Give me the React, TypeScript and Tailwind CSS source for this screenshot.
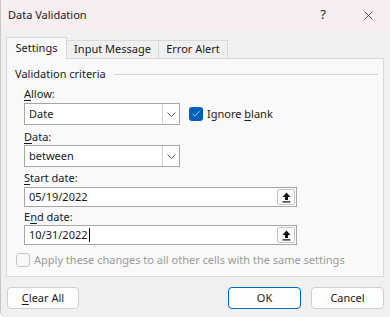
import { Check, X } from "lucide-react";

const font = { fontFamily: '"Noto Sans", "Segoe UI", sans-serif' };

function Label({ text, u, className = "" }: { text: string; u: number; className?: string }) {
  return (
    <div className={`h-4 text-[11px] leading-4 text-[#1a1a1a] ${className}`}>
      {text.slice(0, u)}
      <span className="underline underline-offset-2">{text[u]}</span>
      {text.slice(u + 1)}
    </div>
  );
}

function Dropdown({ value }: { value: string }) {
  return (
    <div className="flex h-[22px] w-[156px] border border-[#a6a6a6] bg-white">
      <div className="flex-1 pl-[4px] text-[11px] leading-5 text-[#1a1a1a]">{value}</div>
      <div className="flex w-[17px] items-center justify-center border-l border-[#cfcfcf]">
        <svg width="9" height="5" viewBox="0 0 9 5">
          <path d="M0.5 0.5 L4.5 4.5 L8.5 0.5" fill="none" stroke="#606060" strokeWidth="1" />
        </svg>
      </div>
    </div>
  );
}

function RangeInput({ value, caret }: { value: string; caret?: boolean }) {
  return (
    <div className="flex h-5 w-[273px] items-center border border-[#a6a6a6] bg-white pr-[1px]">
      <div className="flex flex-1 items-center pl-[4px] text-[11px] leading-4 text-[#1a1a1a]">
        {value}
        {caret && <span className="ml-px inline-block h-[14px] w-px bg-black" />}
      </div>
      <div className="flex h-[16px] w-[18px] items-center justify-center rounded-[2px] border border-[#c4c4c4] bg-[#fbfbfb]">
        <svg width="9" height="11" viewBox="0 0 9 11">
          <path d="M4.5 0.5 L8.5 5 L6 5 L6 8 L3 8 L3 5 L0.5 5 Z" fill="#111" />
          <rect x="0.5" y="9.3" width="8" height="1.2" fill="#111" />
        </svg>
      </div>
    </div>
  );
}

export default function App() {
  return (
    <div style={font} className="relative h-[317px] w-[390px] overflow-hidden rounded-bl-[6px] border-l border-[#c8c8c8] bg-[#f0f0f0]">
      <div className="flex h-[30px] items-center bg-[#f7eef2] pl-[7px] text-[11px] text-[#1a1a1a]">
        <span>Data Validation</span>
        <span className="ml-auto mr-[35px] text-[13px]">?</span>
        <X size={15} strokeWidth={1.2} className="mr-[14px] text-[#222]" />
      </div>

      <div className="ml-[5px] mt-[7px] flex h-[21px] items-end text-[11px] text-[#1a1a1a]">
        <div className="relative z-10 -mb-px flex h-[22px] w-[61px] items-center justify-center border border-b-0 border-[#d9d9d9] bg-[#f9f9f9]">
          Settings
        </div>
        <div className="flex h-[18px] w-[92px] items-center justify-center border border-b-0 border-l-0 border-[#d9d9d9] bg-[#f0f0f0]">
          Input Message
        </div>
        <div className="flex h-[18px] w-[69px] items-center justify-center border border-b-0 border-l-0 border-[#d9d9d9] bg-[#f0f0f0]">
          Error Alert
        </div>
      </div>

      <div className="ml-[5px] h-[219px] w-[378px] border border-[#d9d9d9] bg-[#f9f9f9]">
        <div className="mt-[7px] flex h-4 items-center pl-[8px]">
          <span className="text-[11px] leading-4 text-[#1a1a1a]">Validation criteria</span>
          <div className="ml-[8px] mr-[5px] h-px flex-1 bg-[#d6d6d6]" />
        </div>

        <div className="pl-[17px]">
          <Label text="Allow:" u={0} className="mt-[4px]" />
          <div className="mt-px flex items-center">
            <Dropdown value="Date" />
            <div className="ml-[9px] flex h-[14px] w-[14px] items-center justify-center rounded-[3px] bg-[#005fb8]">
              <Check size={10} strokeWidth={1.6} className="text-white" />
            </div>
            <span className="ml-[4px] text-[11px] text-[#1a1a1a]">
              Ignore <span className="underline underline-offset-2">b</span>lank
            </span>
          </div>

          <Label text="Data:" u={0} className="mt-[4px]" />
          <Dropdown value="between" />

          <Label text="Start date:" u={0} className="mt-[3px]" />
          <div className="mt-px">
            <RangeInput value="05/19/2022" />
          </div>

          <Label text="End date:" u={1} className="mt-[2px]" />
          <RangeInput value="10/31/2022" caret />
        </div>

        <div className="ml-[9px] mt-[7px] flex items-center">
          <div className="h-[14px] w-[14px] rounded-[3px] border border-[#c8c8c8] bg-[#f9f9f9]" />
          <span className="ml-[4px] text-[11px] text-[#9a9a9a]">
            Apply these changes to all other cells with the same settings
          </span>
        </div>
      </div>

      <div className="mt-[10px] flex px-[6px] text-[11px] text-[#1a1a1a]">
        <button className="flex h-[22px] w-[72px] items-center justify-center rounded-[4px] border border-[#cfcfcf] bg-[#fdfdfd]">
          <span className="underline underline-offset-2">C</span>lear All
        </button>
        <button className="ml-auto flex h-[22px] w-[73px] items-center justify-center rounded-[4px] border border-[#0067c0] bg-[#fdfdfd]">
          OK
        </button>
        <button className="ml-[10px] flex h-[22px] w-[73px] items-center justify-center rounded-[4px] border border-[#cfcfcf] bg-[#fdfdfd]">
          Cancel
        </button>
      </div>
    </div>
  );
}
